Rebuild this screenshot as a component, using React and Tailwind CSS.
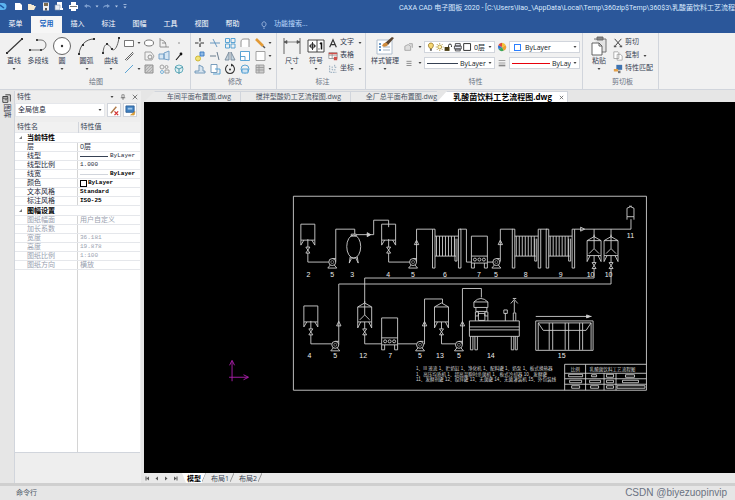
import { useState } from 'react'
import clsx from 'clsx'

const MENUS = ['菜单', '常用', '插入', '标注', '图幅', '工具', '视图', '帮助']
const FILES = ['车间平面布置图.dwg', '搅拌型酸奶工艺流程图.dwg', '全厂总平面布置图.dwg', '乳酸菌饮料工艺流程图.dwg']
const LAYOUTS = ['模型', '布局1', '布局2']

const PROPERTIES = [
  {
    title: '当前特性',
    rows: [
      { name: '层', value: '0层' },
      { name: '线型', value: 'ByLayer', line: 'bg-gray-700' },
      { name: '线型比例', value: '1.000' },
      { name: '线宽', value: 'ByLayer', line: 'bg-gray-300', dark: true },
      { name: '颜色', value: 'ByLayer', swatch: true, dark: true },
      { name: '文本风格', value: 'Standard', dark: true },
      { name: '标注风格', value: 'ISO-25', dark: true },
    ],
  },
  {
    title: '图幅设置',
    disabled: true,
    rows: [
      { name: '图纸幅面', value: '用户自定义' },
      { name: '加长系数', value: '' },
      { name: '宽度', value: '36.181' },
      { name: '高度', value: '19.878' },
      { name: '图纸比例', value: '1:100' },
      { name: '图纸方向', value: '横放' },
    ],
  },
]

function Caret({ className }) {
  return (
    <svg viewBox="0 0 4 2" className={clsx('w-[4px] h-[2px] shrink-0', className)}>
      <path d="M0.500 0h3L2 2z" fill="#444" />
    </svg>
  )
}

function Icon({ children, size = 'w-3 h-3', box = '0 0 12 12', className }) {
  return (
    <svg viewBox={box} fill="none" stroke="#666" strokeWidth="0.9" className={clsx('shrink-0', size, className)}>
      {children}
    </svg>
  )
}

/* ---------- ribbon icons ---------- */

const big = {
  line: (
    <>
      <path d="M3 17L18 3" stroke="#333" strokeWidth="1.1" />
      <path d="M2 16h2v2H2zM17 2h2v2h-2z" fill="#333" stroke="none" />
    </>
  ),
  polyline: (
    <>
      <path d="M2 14h11M9 4h4a5 5 0 0 1 0 10" stroke="#666" />
      <path d="M1 13h2v2H1zM8 3h2v2H8zM12 13h2v2h-2z" fill="#444" stroke="none" />
    </>
  ),
  circle: (
    <>
      <circle cx="10" cy="10" r="8.5" fill="#fff" stroke="#555" />
      <circle cx="10" cy="10" r="1.2" fill="#333" stroke="none" />
    </>
  ),
  arc: (
    <>
      <path d="M2 18C3 9 9 3 17 3" stroke="#444" />
      <path d="M1 17h2v2H1zM16 2h2v2h-2zM5 8h2v2H5z" fill="#333" stroke="none" />
    </>
  ),
  curve: (
    <>
      <path d="M2 17C3 5 8 8 10 12s6 2 8-10" stroke="#555" />
      <path d="M1 16h2v2H1zM5 7h2v2H5zM10 12h2v2h-2zM17 1h2v2h-2z" fill="#333" stroke="none" />
    </>
  ),
  dimension: (
    <>
      <path d="M2 2v16M18 2v16" stroke="#555" />
      <path d="M2 6h16M2 6l3-1.5v3zM18 6l-3-1.5v3z" stroke="#555" fill="#555" strokeWidth="0.7" />
    </>
  ),
  symbol: (
    <>
      <path d="M2 4h16v12H2zM11 4v12" fill="#fff" stroke="#333" />
      <circle cx="6.500" cy="10" r="2.200" stroke="#222" />
      <path d="M3 10h7M6.500 6v8" stroke="#222" />
      <path d="M15.500 6.500v7M14 8l1.500-1.500" stroke="#111" strokeWidth="1.500" />
      <path d="M12.500 12.500h1v1h-1z" fill="#111" stroke="none" />
    </>
  ),
  style: (
    <>
      <path d="M2 4h15v14H2z" fill="#fff" stroke="#a7b8c9" />
      <path d="M4 8h2M4 11h2M4 14h2" stroke="#3b78b5" strokeWidth="1.300" />
      <path d="M8 11h7M8 14h7" stroke="#9ab" />
      <path d="M10 7l7-6 2 1-6 7z" fill="#5a4633" stroke="none" />
      <path d="M7 10c1-3 3-4 5-3l1 2c-2 2-4 2-6 1z" fill="#d08b3c" stroke="none" />
    </>
  ),
  paste: (
    <>
      <path d="M5 3h12v13h-4" stroke="#666" fill="#e4e4e4" />
      <path d="M8 1h6v3H8z" fill="#888" stroke="#666" />
      <path d="M3 7h7l3 3v9H3z" fill="#fff" stroke="#555" />
      <path d="M10 7v3h3" stroke="#555" />
    </>
  ),
}

const drawTools = [
  ['矩形', <path d="M1.500 3.500h9v6h-9z" fill="#fff" />, true],
  ['椭圆', <ellipse cx="6" cy="6" rx="4.500" ry="3" fill="#fff" />],
  ['公式曲线', <path d="M2 1v9h9M2 3c5 0 6 3 6 7M4 6h4" stroke="#888" />],
  ['点', <path d="M5.500 5.500h1v1h-1z" fill="#333" stroke="none" />],
  ['平行线', <path d="M2 10l8-8M3.500 10.500l7-7" stroke="#555" />],
  ['正多边形', <><path d="M2 2h6l3 4-2 4H2z" stroke="#999" /><circle cx="7" cy="7" r="2" stroke="#888" /></>],
  ['图块', <path d="M1 4h5v5H1zM6 3l5-2v9l-5-1z" stroke="#6b9ac4" fill="#d6e6f3" />],
  ['箭头', <><path d="M3 10l5-6" stroke="#111" strokeWidth="1.100" /><circle cx="8" cy="4" r="1.400" fill="#111" stroke="none" /></>],
  ['中心线', <path d="M2 10l8-8" stroke="#4a9bd0" />, true],
  ['剖面线', <><path d="M2 2h8v8H2z" fill="#ccc" stroke="#888" /><path d="M2 5l3-3M2 8l6-6M3 10l7-7M6 10l4-4" stroke="#999" strokeWidth="0.600" /></>],
  ['孔轴', <><circle cx="4" cy="4" r="2" stroke="#999" /><circle cx="8.500" cy="4" r="1.500" stroke="#999" /><circle cx="4" cy="9" r="1.500" stroke="#6badd8" /><path d="M7 7h4v3H7z" stroke="#999" /></>],
  ['局部放大', <><circle cx="6" cy="6" r="4" stroke="#5aa7b8" fill="#dff0f3" /><path d="M2 4l4 2v5M6 6l4-2" stroke="#3f8fa3" /></>],
]

const editTools = [
  ['平移', <path d="M6 1v10M1 6h10" stroke="#333" strokeDasharray="3.500 2" strokeWidth="1.200" />],
  ['裁剪', <path d="M1 6h10M4 2l4 8" stroke="#5a8fbb" />],
  ['阵列', <path d="M1.500 1.500h4v4h-4zM7 1.500h4v4H7zM1.500 7h4v4h-4zM7 7h4v4H7z" stroke="#4a9bd0" />],
  ['圆角', <path d="M2 10V5c0-2 1-3 3-3h5v8" fill="#fff" stroke="#888" />],
  ['编辑', <><path d="M2 2l7 7" stroke="#e29a36" strokeWidth="2.600" /><path d="M9 9l2 2" stroke="#555" strokeWidth="1.500" /></>, true],
  ['复制', <><circle cx="4" cy="8.500" r="2.500" stroke="#c9b12c" fill="#f1e37a" /><path d="M6 2h4v4H6z" stroke="#3979c1" fill="#8db9e6" /></>],
  ['延伸', <path d="M1 6h6M8 2l2 8" stroke="#5a6f85" />],
  ['镜像', <path d="M5 2v8H1zM7 2v8h4z" stroke="#789" fill="#c5d5e0" />],
  ['缩放', <path d="M1.500 1.500h9v9h-9zM1.500 6.500h4.500v4" fill="#fff" stroke="#4a9bd0" />],
  ['分解', <path d="M2 1.500h9v9H2z" fill="#fff" stroke="#999" />, true],
  ['偏移', <path d="M1 10h10V8H9V4L5 2v6H1z" fill="#d7e4ef" stroke="#6b93b5" />],
  ['拉伸', <><path d="M2 1.500h6v8H2z" stroke="#6b93b5" fill="#fff" /><path d="M6 6h5v5H4" stroke="#4a9bd0" /></>],
  ['旋转', <><path d="M4 2a4.500 4.500 0 1 0 4 0" stroke="#333" strokeWidth="1.100" /><circle cx="6" cy="6.500" r="1" fill="#333" stroke="none" /><path d="M7 0.500v3l3-1z" fill="#333" stroke="none" /></>],
  ['打断', <><circle cx="6" cy="6" r="4" stroke="#4a9bd0" /><path d="M3 6h6v4H3z" stroke="#4a9bd0" fill="#cfe3f2" /></>],
  ['填充', <path d="M2 2h8v8H2zM2 4.500h8M2 7h8M5 2v8" fill="#ccc" stroke="#999" />, true],
]

/* ---------- ribbon building blocks ---------- */

function Group({ label, className, children }) {
  return (
    <section className={clsx('flex flex-col shrink-0 border-r border-gray-300 pt-[3px]', className)}>
      <div className="flex flex-1 items-start">{children}</div>
      <div className="text-center text-[7px] leading-[14px] text-gray-500">{label}</div>
    </section>
  )
}

function BigButton({ icon, label, caret = true, className }) {
  return (
    <button className={clsx('flex flex-col items-center shrink-0 text-[7px] leading-[10px] text-gray-700', className)}>
      <Icon size="w-5 h-5" box="0 0 20 20">{big[icon]}</Icon>
      <span className="whitespace-nowrap">{label}</span>
      {caret && <Caret className="mt-[2px]" />}
    </button>
  )
}

function ToolGrid({ tools, className }) {
  return (
    <div className={clsx('grid auto-rows-[13px] items-center', className)}>
      {tools.map(([name, art, caret]) => (
        <button key={name} aria-label={name} className="flex items-center gap-[2px]">
          <Icon>{art}</Icon>
          {caret && <Caret />}
        </button>
      ))}
    </div>
  )
}

function ListButton({ label, caret, children }) {
  return (
    <button className="flex items-center h-[13px] gap-[2px] text-[7px] text-gray-700 whitespace-nowrap">
      <Icon size="w-[10px] h-[10px]">{children}</Icon>
      {label}
      {caret && <Caret className="ml-[2px]" />}
    </button>
  )
}

function Combo({ label, value, children }) {
  return (
    <div className="flex items-center h-[12px] w-[71px] px-[2px] gap-[2px] bg-white border border-gray-300">
      {children}
      <select aria-label={label} className="appearance-none min-w-0 flex-1 bg-transparent text-[7px] leading-[9px] text-gray-900 outline-none">
        <option>{value}</option>
      </select>
      <Caret />
    </div>
  )
}

function Ribbon() {
  return (
    <div className="flex h-[57px] shrink-0 bg-[#f1f1f1] border-b border-gray-300 overflow-hidden">
      <Group label="绘图" className="w-[191px] pl-[2px]">
        <BigButton icon="line" label="直线" className="w-6" />
        <BigButton icon="polyline" label="多段线" caret={false} className="w-6" />
        <BigButton icon="circle" label="圆" className="w-6" />
        <BigButton icon="arc" label="圆弧" className="w-[25px]" />
        <BigButton icon="curve" label="曲线" className="w-6" />
        <ToolGrid tools={drawTools} className="grid-cols-[20px_15px_15px_12px]" />
      </Group>

      <Group label="修改" className="w-[86px] pl-[3px]">
        <ToolGrid tools={editTools} className="grid-cols-[15px_15px_15px_15px_20px]" />
      </Group>

      <Group label="标注" className="w-[89px] pl-[3px]">
        <BigButton icon="dimension" label="尺寸" className="w-6" />
        <BigButton icon="symbol" label="符号" className="w-6" />
        <div className="flex flex-col">
          <ListButton label="文字" caret>
            <path d="M2 11L6 2l4 9M3.500 8h5" stroke="#333" strokeWidth="1.400" />
          </ListButton>
          <ListButton label="表格">
            <path d="M1 2h10v7H1zM1 5h10M5 2v7" fill="#fff" stroke="#888" />
            <path d="M1 2h10v2H1zM7 7h4v4H7z" fill="#d0504a" stroke="none" />
          </ListButton>
          <ListButton label="坐标" caret>
            <path d="M2 2v8h8M5 3v4h4M8 1v3h3" stroke="#7795ad" strokeDasharray="2 1" />
          </ListButton>
        </div>
      </Group>

      <Group label="特性" className="w-[217px] pl-[3px]">
        <BigButton icon="style" label="样式管理" className="w-[32px]" />
        <div className="flex flex-col gap-[4px] pl-[3px] pt-[5px]">
          <div className="flex items-center gap-[2px]">
            <button aria-label="图层" className="flex items-center gap-[4px]">
              <Icon size="w-[10px] h-[10px]">
                <path d="M1 5l4-2 3 2v5H1zM6 2h4v5" stroke="#999" fill="#ddd" />
              </Icon>
              <Caret />
            </button>
            <Combo label="图层" value="0层">
              <svg viewBox="0 0 46 10" fill="none" className="w-[45px] h-[10px] shrink-0">
                <path d="M3 6.500C0 3 2 1 4 1s4 2 1 5.500z" fill="#f7d774" stroke="#8a6a1a" strokeWidth="0.800" />
                <path d="M3 8h2" stroke="#444" strokeWidth="1.500" />
                <circle cx="13" cy="5" r="2" fill="#fff4b8" stroke="#a88a2a" strokeWidth="0.800" />
                <path d="M13 1v1M13 8v1M9 5h1M16 5h1M10 2l1 1M16 2l-1 1M10 8l1-1M16 8l-1-1" stroke="#a88a2a" strokeWidth="0.800" />
                <path d="M18 5h5v4h-5z" fill="#4a3d12" />
                <path d="M22 5V3.500a1.500 1.500 0 0 1 3 0V5" stroke="#333" />
                <path d="M28 4h7v3h-7zM29 1.500h5V4h-5zM29 7h5v2h-5z" stroke="#444" fill="#e8eaf6" strokeWidth="0.900" />
                <path d="M37.500 1.500h7v7h-7z" fill="#fff" stroke="#333" />
              </svg>
            </Combo>
            <Icon size="w-[10px] h-[10px]">
              <path d="M6 6V1a5 5 0 0 1 4.500 3z" fill="#f2c230" stroke="none" />
              <path d="M6 6l4.500-2A5 5 0 0 1 8 10.500z" fill="#f0a030" stroke="none" />
              <path d="M6 6l2 4.500A5 5 0 0 1 2 9z" fill="#3fa75a" stroke="none" />
              <path d="M6 6L2 9a5 5 0 0 1-.5-5z" fill="#3173d0" stroke="none" />
              <path d="M6 6L1.500 4A5 5 0 0 1 6 1z" fill="#e0483a" stroke="none" />
            </Icon>
            <Combo label="颜色" value="ByLayer">
              <span className="w-[7px] h-[7px] mx-[2px] border border-blue-500 shrink-0"></span>
            </Combo>
          </div>
          <div className="flex items-center gap-[2px]">
            <button aria-label="线宽" className="flex items-center gap-[4px]">
              <Icon size="w-[10px] h-[10px]">
                <path d="M3 4h6M3 6.500h6M3 9h6" stroke="#888" strokeWidth="1.100" />
              </Icon>
              <Caret />
            </button>
            <Combo label="线型" value="ByLayer">
              <span className="w-[31px] h-px bg-gray-700 shrink-0"></span>
            </Combo>
            <Icon size="w-[10px] h-[10px]">
              <path d="M2 3h8M2 6h8" stroke="#888" />
              <path d="M2 9h8" stroke="#888" strokeWidth="2" />
            </Icon>
            <Combo label="线宽值" value="ByLayer">
              <span className="w-[38px] h-px bg-red-600 shrink-0"></span>
            </Combo>
          </div>
        </div>
      </Group>

      <Group label="剪切板" className="w-[76px] pl-[4px]">
        <BigButton icon="paste" label="粘贴" className="w-6" />
        <div className="flex flex-col pl-[2px]">
          <ListButton label="剪切">
            <path d="M2 1l7 8M10 1L3 9" stroke="#444" strokeWidth="1.200" />
            <path d="M1 9h3v2H1zM8 9h3v2H8z" fill="#555" stroke="none" />
          </ListButton>
          <ListButton label="复制" caret>
            <path d="M1 1h5l1 1v7H1zM5 4h4l2 2v5H5z" fill="#fff" stroke="#999" />
          </ListButton>
          <ListButton label="特性匹配">
            <path d="M4 1h7v6H4z" fill="#3f73b0" stroke="none" />
            <path d="M1 6h5v3H1z" fill="#e3a04a" stroke="none" />
            <path d="M6 8h3v3H6z" fill="#777" stroke="none" />
          </ListButton>
        </div>
      </Group>
    </div>
  )
}

function TitleBar() {
  return (
    <div className="flex items-center h-[16px] shrink-0 text-white">
      <svg viewBox="0 0 130 12" fill="none" className="w-[130px] h-[12px] shrink-0">
        <path d="M0 1h3a3.500 3.500 0 0 1 0 7H0z" fill="#5bb4f0" />
        <path d="M0 3l4 3" stroke="#1d56a5" strokeWidth="1.500" />
        <path d="M15 1h5l2 2v5h-7z" fill="#fff" />
        <path d="M28 2h3l1 1h2v1h2l-2 4h-6z" fill="#f4ead2" />
        <path d="M43 0.500h6v8h-6z" fill="#eee" />
        <path d="M44 1h4v3h-4z" fill="#7a6b50" />
        <path d="M45 6h2v2.500h-2z" fill="#555" />
        <path d="M57 0h5v6h-5z" fill="#fff" />
        <path d="M55 3h5v5h-5z" fill="#e9eef5" stroke="#7f90a8" strokeWidth="0.600" />
        <path d="M60 6h3v2h-3z" fill="#fff" />
        <path d="M71 0h5v3h-5zM69 3h9v4h-9zM71 6h5v3h-5z" fill="#fff" />
        <path d="M70 4.500h7" stroke="#555" strokeWidth="0.800" />
        <path d="M87 2l-3 2 3 2V4.500c2 0 3 0 4 2 0-2-1-3.500-4-3.500z" fill="#7fa0d0" />
        <path d="M107 2l3 2-3 2V4.500c-2 0-3 0-4 2 0-2 1-3.500 4-3.500z" fill="#7fa0d0" />
        <path d="M95.500 3.500h3l-1.500 2zM115 3.500h3l-1.500 2zM123.500 4.500h3l-1.500 2z" fill="#b8cbe8" />
        <path d="M123.500 2.500h3" stroke="#b8cbe8" strokeWidth="0.800" />
      </svg>
      <h1 className="ml-auto whitespace-nowrap text-[7px] text-blue-100 font-['Roboto','Noto_Sans_CJK_SC',sans-serif]">
        CAXA CAD 电子图板 2020 - [C:\Users\liao_\AppData\Local\Temp\360zip$Temp\360$3\乳酸菌饮料工艺流程
      </h1>
    </div>
  )
}

function MenuBar({ active, onSelect }) {
  return (
    <nav className="flex h-[17px] shrink-0 text-[7px]">
      {MENUS.map((m) => (
        <button
          key={m}
          onClick={() => onSelect(m)}
          className={clsx('w-[31px]', m === active ? 'bg-[#f6f6f6] text-[#2266c0] font-bold' : 'text-white')}
        >
          {m}
        </button>
      ))}
      <label className="flex items-center gap-[6px] ml-[12px] text-blue-200">
        <Icon size="w-2 h-2" box="0 0 8 10">
          <path d="M3 7C0 4 2 1 4 1s4 3 1 6zM3 9h2" stroke="#bcd0ee" />
        </Icon>
        <input placeholder="功能搜索..." className="w-[60px] bg-transparent outline-none placeholder:text-blue-200" />
      </label>
    </nav>
  )
}

function PropertyPanel() {
  return (
    <aside className="flex flex-col w-[127px] shrink-0 bg-[#eeeeee] border-l border-gray-300 text-[7px] text-gray-700">
      <div className="flex items-center h-[12px] pl-[2px] pr-[3px] gap-[6px]">
        <span className="flex-1">特性</span>
        <Caret />
        <button aria-label="固定"><Icon size="w-[6px] h-[6px]" box="0 0 8 8"><path d="M2.500 1h3v4h-3zM1 5h6M4 5v3" /></Icon></button>
        <button aria-label="关闭"><Icon size="w-[6px] h-[6px]" box="0 0 8 8"><path d="M1 1l6 6M7 1L1 7" stroke="#444" /></Icon></button>
      </div>
      <div className="flex items-center gap-[2px] pr-[4px] mb-[5px]">
        <div className="flex flex-1 items-center h-[14px] px-[2px] bg-white border border-gray-200">
          <select aria-label="选择对象" className="appearance-none flex-1 bg-transparent outline-none text-gray-800">
            <option>全局信息</option>
          </select>
          <Caret />
        </div>
        <button aria-label="清除选择" className="flex items-center justify-center w-[14px] h-[14px] bg-white border border-gray-300">
          <Icon size="w-[11px] h-[11px]">
            <path d="M2 9l6-7" stroke="#b07a4a" strokeWidth="1.600" />
            <path d="M6 7l4 4M10 7l-4 4" stroke="#d3302f" strokeWidth="1.400" />
          </Icon>
        </button>
        <button aria-label="快速选择" className="flex items-center justify-center w-[14px] h-[14px] bg-white border border-gray-300">
          <Icon size="w-[11px] h-[11px]">
            <path d="M1 1h9v7H1z" fill="#3f80c0" stroke="#2f5f95" />
            <path d="M3 3h5v2H3z" fill="#9fc5e8" stroke="none" />
            <path d="M6 11l5-4-1 4z" fill="#e7a93b" stroke="#b97a18" strokeWidth="0.500" />
          </Icon>
        </button>
      </div>
      <div className="flex-1 bg-white mr-[1px] bg-[linear-gradient(#d4d4d4,#d4d4d4)] bg-[length:1px_100%] bg-[position:62px_0] bg-no-repeat border-b border-gray-300">
        <table className="w-full table-fixed border-collapse leading-[8px]">
          <thead>
            <tr className="bg-[#f1f1f1] border-b border-gray-200">
              <th className="w-[63px] p-0 pl-[2px] text-left font-normal leading-[10px] border-r border-gray-300">特性名</th>
              <th className="p-0 pl-[2px] text-left font-normal leading-[10px]">特性值</th>
            </tr>
          </thead>
          {PROPERTIES.map((g) => (
            <tbody key={g.title}>
              <tr className="bg-white border-b border-gray-200">
                <th colSpan="2" className="p-0 text-left leading-[9px] text-black">
                  <span className="flex items-center gap-[5px] pl-[4px]">
                    <svg viewBox="0 0 3 3" className="w-[3px] h-[3px]"><path d="M3 0v3H0z" fill="#777" /></svg>
                    {g.title}
                  </span>
                </th>
              </tr>
              {g.rows.map((r) => (
                <tr key={r.name} className={clsx('border-b border-gray-200', g.disabled ? 'text-gray-400' : 'text-gray-800')}>
                  <td className="p-0 pl-[12px]">{r.name}</td>
                  <td className={clsx('p-0 h-[8px]', r.dark && 'text-black font-bold')}>
                    <span className="flex items-center h-[8px] pl-[2px] whitespace-nowrap">
                      {r.line && <span className={clsx('w-[28px] h-px mr-[2px]', r.line)}></span>}
                      {r.swatch && <span className="w-[7px] h-[7px] mr-px border border-black"></span>}
                      <span className={clsx(/^[\x20-\x7e]+$/.test(r.value) && "text-[6px] font-['Liberation_Mono',monospace]")}>{r.value}</span>
                    </span>
                  </td>
                </tr>
              ))}
            </tbody>
          ))}
        </table>
      </div>
      <div className="h-[30px]"></div>
    </aside>
  )
}

/* ---------- process drawing ---------- */

function Valve({ x, y }) {
  return <path d={`M${x - 2} ${y}h4l-4 6h4z`} />
}

function Pump({ x, y }) {
  return (
    <g>
      <circle cx={x} cy={y} r="3.500" />
      <circle cx={x} cy={y} r="1.500" strokeWidth="0.500" />
      <path d={`M${x - 2} ${y + 3}l-2.500 3h9l-2.500-3M${x} ${y - 3.5}h3.500`} />
    </g>
  )
}

function UpArrow({ x, y }) {
  return <path d={`M${x - 2.2} ${y}h4.400l-2.200-4.500z`} />
}

// open tank with short legs, outlet valve below
function Tank({ x, y }) {
  return (
    <g>
      <path d={`M${x - 7} ${y}h14v16h-14z`} />
      <path d={`M${x - 7} ${y + 16}v5l3-5M${x + 7} ${y + 16}v5l-3-5M${x} ${y + 15}v8M${x} ${y + 29}v9`} />
      <Valve x={x} y={y + 23} />
    </g>
  )
}

// closed tank with a conical lid, optionally with a stirrer
function ConeTank({ x, y, stirrer }) {
  return (
    <g>
      <path d={`M${x - 7} ${y + 4}l7-4l7 4zM${x - 7} ${y + 4}v15h14v-15`} />
      <path d={`M${x - 7} ${y + 19}v6l3-6M${x + 7} ${y + 19}v6l-3-6M${x} ${y + 19}v7`} />
      {stirrer && <path d={`M${x} ${y - 2}v14l-5 5M${x} ${y + 12}l5 5`} />}
      <Valve x={x} y={y + 26} />
    </g>
  )
}

function Exchanger({ x }) {
  const plates = [3, 6, 9, 12, 15, 18, 21]
  return (
    <g>
      <path d={`M${x} 229.500h2.500v39h-2.500zM${x + 26} 229.500h2.500v39h-2.500z`} />
      <path d={`M${x + 2.500} 236.500h23.500M${x + 2.500} 256.500h21M${x + 22.500} 239v22.500h2v-22.500`} />
      {plates.map((p) => (
        <path key={p} d={`M${x + p + 1} 236.500v20`} />
      ))}
    </g>
  )
}

function Homogenizer({ x, y }) {
  return (
    <g>
      <path d={`M${x} ${y}h16v27h-16zM${x} ${y + 20}h16`} />
      {[3.5, 8, 12.5].map((d) => (
        <circle key={d} cx={x + d} cy={y + 23.5} r="1.500" />
      ))}
      <path d={`M${x} ${y + 27}v5h3v-5M${x + 13} ${y + 27}v5h3v-5`} />
    </g>
  )
}

const LABELS = [
  [308, 277, '2'], [332, 277, '5'], [352, 277, '3'], [388, 277, '4'], [413, 277, '5'], [445, 277, '6'],
  [479, 277, '7'], [496, 277, '5'], [526, 277, '8'], [561, 277, '9'], [591, 277, '10'], [609, 277, '10'], [631, 238, '11'],
  [309, 359, '4'], [335, 359, '5'], [363, 359, '12'], [390, 359, '7'], [420, 359, '5'], [440, 359, '13'], [459, 359, '5'],
  [491, 359, '14'], [562, 359, '15'],
]

function ProcessDrawing() {
  return (
    <svg viewBox="144 102 591 372" className="block w-full h-full" fill="none" stroke="#d0d0d0" strokeWidth="0.9">
      <path d="M293 196.500h354v194.500h-354z" />

      {/* upper line */}
      <Tank x={307.5} y={224.5} />
      <path d="M307.500 262.500h21M335.500 262v-32.500h19v5" />
      <Pump x={332} y={262.5} />
      <ellipse cx="353.500" cy="247" rx="7" ry="11.500" />
      <path d="M351 234.500h5v2h-5zM350 257l-1 6.500M349 263.500l2-4M357 257l1 6.500M358 263.500l-2-4M350 258.500h7" />
      <path d="M356 235h17.500v-14.500h15v7" />
      <path d="M367 233v4l3.500-2z" fill="#d0d0d0" />
      <Tank x={388.5} y={224.5} />
      <path d="M388.500 262.500h21M416.500 262v-32.500h16" />
      <UpArrow x={416.5} y={245} />
      <Pump x={413} y={262.5} />
      <Exchanger x={432.5} />
      <path d="M460 229.500h6.500v33h5" />
      <Homogenizer x={471.5} y={236.5} />
      <path d="M487.500 262.500h6M500.500 262v-32.500h12.500" />
      <UpArrow x={500.5} y={245} />
      <Pump x={496.5} y={262.5} />
      <Exchanger x={512.5} />
      <path d="M541 229.500h6.500" />
      <Exchanger x={546.5} />
      <path d="M575 229.500h56.500v-10M581 227.500v4l4-2z" />
      <path d="M627.500 208.500q3.500-3 7 0v8.500h-7zM627.500 217v3M634.500 217v3M629.500 206.500h3" />
      <path d="M594.500 229.500v8M611.500 229.500v8M594.500 269v9.500h-230v25M611.500 269v15.500h-273v60.500" />
      <ConeTank x={594.5} y={237} stirrer />
      <ConeTank x={611.5} y={237} stirrer />

      {/* lower line */}
      <Tank x={310.5} y={306.5} />
      <path d="M310.500 344.500h21" />
      <UpArrow x={338.5} y={326.5} />
      <Pump x={335} y={345.5} />
      <ConeTank x={364.5} y={303.5} stirrer />
      <path d="M364.500 335v9.500h17M397.500 344.500h19" />
      <Homogenizer x={381.5} y={318.5} />
      <Pump x={420} y={345.5} />
      <path d="M424.500 345v-45.500h18v4" />
      <UpArrow x={424.5} y={326.5} />
      <ConeTank x={441.5} y={303.5} />
      <path d="M441.500 335v9.500h14" />
      <Pump x={459} y={345.5} />
      <path d="M462.500 345v-56h19v9" />
      <UpArrow x={462.5} y={326.5} />

      {/* filling machine */}
      <path d="M474 302.500q7-7 14 0v5.500h-14zM474 302.500h14M476 308v4h11v-4M475.500 312.500h3v4h-3zM485 312.500h3v4h-3z" />
      <path d="M478.500 314h6.500v7h-6.500zM475.500 316.500v5M488 316.500v5" />
      <path d="M469.500 321.500h50v15.500h-50zM469.500 327.500h50M469.500 330.500h50" />
      <path d="M470.500 337v13.500h2.500v-13.500M475 337v13.500h2.500v-13.500M511.500 337v13.500h2.500v-13.500M515.500 337v13.500h2v-13.500" />
      <path d="M505.500 321.500v-8M504 310.500h3.500v3.500h-3.500zM513.500 321.500v-8h2.500v8M514.500 313v-12M511 304l3.500-4l3.500 4M513 299h3.500" />

      {/* packing line */}
      <path d="M536 317h56" />
      <path d="M587 315.500v3l4-1.500z" fill="#d0d0d0" />
      <path d="M536 321.500h57.500v29.500h-57.500zM538.500 323.500h53v27M538.500 323.500v27M538.500 323.500l5 7.500h43l5-7.500" />
      <path d="M549.500 323.500v27M553 323.500v27M565.500 323.500v27M569 323.500v27M580 323.500v27M583 323.500v27" />

      {/* title block */}
      <path d="M565 391v-26h82M565 374h82M565 379.500h82M565 385h82M586 365v26M604.500 374v17M616.500 374v17" />
      <path
        d="M569 375h14v2.500h-14zM592 375.500h5v2h-5zM607 375h7v3h-7zM626 375.500h9v2.500h-9zM570 381h12v2.500h-12zM590 381h11v2.500h-11zM607 381h7v2.500h-7zM623 381h16v2.500h-16zM572 386.500h8v2.500h-8zM591 386.500h8v2.500h-8zM607 386.500h7v2.500h-7zM617.500 386.500h28v2.500h-28z"
      />

      <g stroke="none" fill="#ececec" className="font-['Liberation_Sans','Noto_Sans_CJK_SC',sans-serif]">
        {LABELS.map(([x, y, t], i) => (
          <text key={i} x={x} y={y} fontSize="7" textAnchor="middle">{t}</text>
        ))}
        <g fontSize="4.600" fill="#d0d0d0">
          <text x="416" y="371">1、III 液流 1、贮奶缸 1、净化机 1、配料罐 1、奶泵 1、板式换热器</text>
          <text x="416" y="376.500">1、高压均质机 1、超高温瞬时杀菌机 1、板式冷却器 10、发酵罐</text>
          <text x="416" y="382">11、发酵剂罐 12、搅拌罐 13、无菌罐 14、无菌灌装机 15、外包装线</text>
          <text x="571" y="371.500">比例</text>
          <text x="590" y="371.500">乳酸菌饮料工艺流程图</text>
        </g>
      </g>

      {/* coordinate axes */}
      <path d="M231.500 382v-20M228.500 378h19M229 366l2.500-5l2.500 5M243 375.500l5 2.500l-5 2.500" stroke="#b01fb0" />
    </svg>
  )
}

const TAB_STYLES = [
  'w-[97px] pr-[9px] border-r bg-[#eaeaea] [clip-path:polygon(11px_0,100%_0,100%_100%,0_100%)]',
  'w-[110px] pr-[9px] border-r bg-[#eaeaea]',
  'w-[86px] bg-[#eaeaea]',
  'w-[131px] pr-[3px] border-r bg-white text-black font-bold text-[8px] [clip-path:polygon(10px_0,100%_0,100%_100%,0_100%)]',
]

function FileTabs() {
  return (
    <div className="flex h-[11px] shrink-0 text-[7px] leading-[10px] text-gray-600">
      {FILES.map((f, i) => (
        <button
          key={f}
          className={clsx('flex items-center justify-end shrink-0 gap-[7px] whitespace-nowrap border-t border-gray-300', TAB_STYLES[i])}
        >
          {f}
          {i === 3 && (
            <Icon size="w-[5px] h-[5px]" box="0 0 6 6"><path d="M1 1l4 4M5 1L1 5" stroke="#555" /></Icon>
          )}
        </button>
      ))}
    </div>
  )
}

function LayoutTabs() {
  const [active, setActive] = useState('模型')
  return (
    <div className="flex h-[10px] shrink-0 bg-[#e9e9e9] text-[7px] leading-[9px] text-gray-700">
      <svg viewBox="0 0 38 10" className="w-[38px] h-[10px] shrink-0" fill="#555">
        <path d="M1.500 3.500h1v4h-1zM5 3.500v4l-2.500-2zM14 3.500v4l-2.500-2zM21 3.500v4l2.500-2zM30 3.500v4l2.500-2zM32.500 3.500h1v4h-1z" />
      </svg>
      {LAYOUTS.map((l) => (
        <button
          key={l}
          onClick={() => setActive(l)}
          className={clsx(
            'flex items-center whitespace-nowrap',
            l === active && 'bg-white text-black font-bold [clip-path:polygon(0_0,100%_0,calc(100%-4px)_100%,4px_100%)]',
          )}
        >
          <span className="pl-[5px] pr-px">{l}</span>
          <svg viewBox="0 0 4 10" className="w-[4px] h-[10px]"><path d="M4 0L0 9" stroke="#999" fill="none" /></svg>
        </button>
      ))}
    </div>
  )
}

function App() {
  const [menu, setMenu] = useState('常用')

  return (
    <div className="flex flex-col h-screen overflow-hidden bg-[#e6e6e6] font-['Open_Sans','Noto_Sans_CJK_SC',sans-serif]">
      <header className="shrink-0 bg-[#2b579a]">
        <TitleBar />
        <MenuBar active={menu} onSelect={setMenu} />
      </header>
      <Ribbon />

      <main className="flex flex-1 min-h-0 pt-[1px]">
        <button className="flex flex-col items-center w-[14px] shrink-0 pt-[3px] text-[7px] leading-[9px] text-gray-800">
          <Icon size="w-[10px] h-[10px]">
            <path d="M1 3h6v7H1zM4 1h6v8M1 5h6M3 7h3" stroke="#333" strokeWidth="1.100" />
          </Icon>
          <span className="[writing-mode:vertical-rl] [text-orientation:sideways]">图库</span>
        </button>
        <PropertyPanel />
        <div className="flex flex-col flex-1 min-w-0 ml-[3px]">
          <FileTabs />
          <div className="flex-1 min-h-0 bg-black">
            <ProcessDrawing />
          </div>
          <LayoutTabs />
        </div>
      </main>

      <footer className="flex items-center justify-between h-[17px] shrink-0 pl-[16px] pr-[8px] border-t-[3px] border-[#cfcfcf] text-[7px] text-gray-600">
        <span>命令行</span>
        <span className="text-[10px] leading-[12px] text-gray-500 font-['Liberation_Sans',sans-serif]">CSDN @biyezuopinvip</span>
      </footer>
    </div>
  )
}

export default App
